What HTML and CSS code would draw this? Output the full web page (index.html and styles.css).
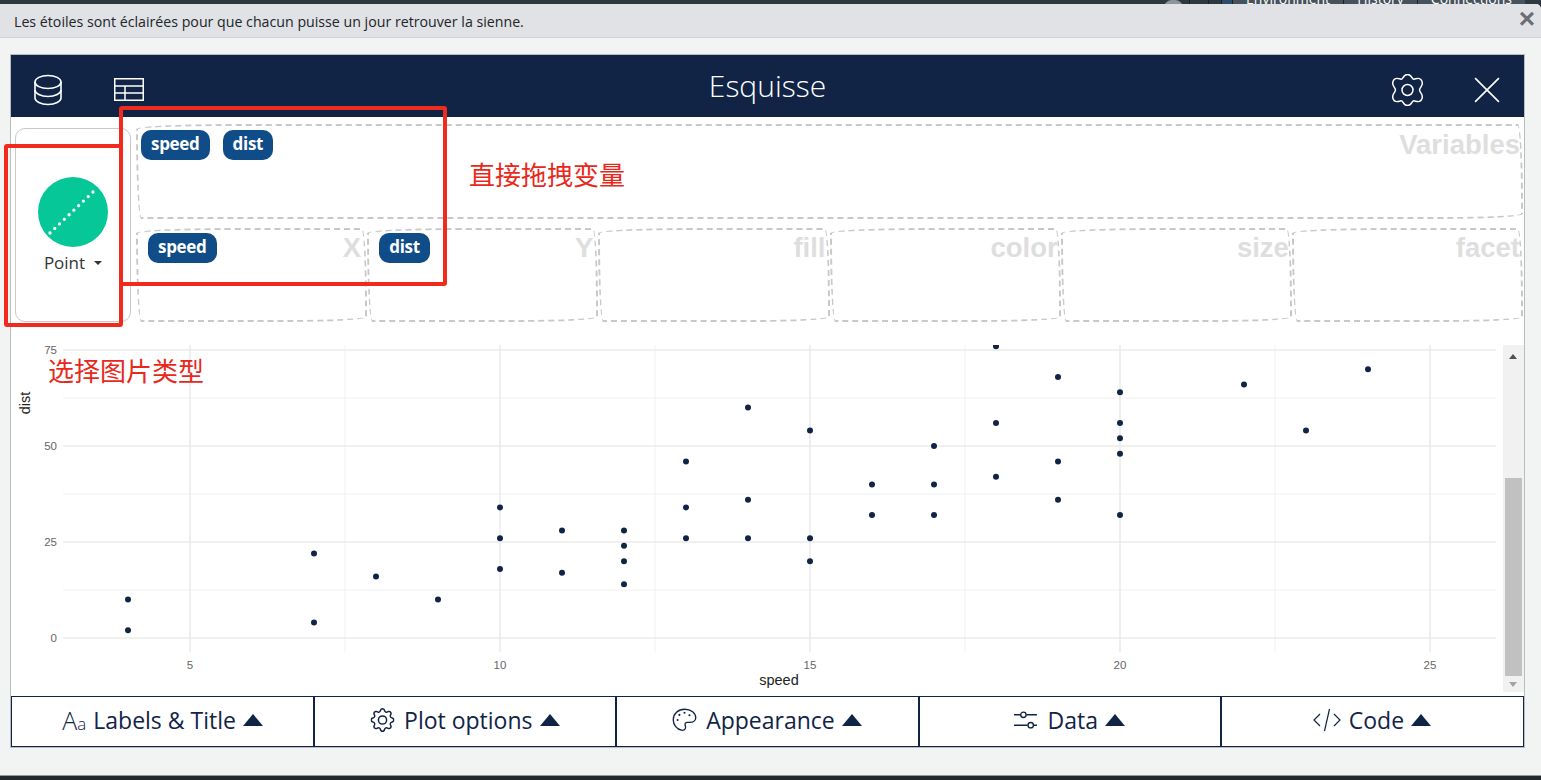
FILE: index.html
```html
<!DOCTYPE html>
<html lang="fr">
<head>
<meta charset="utf-8">
<title>Esquisse</title>
<link rel="stylesheet" href="styles.css">
</head>
<body>
<svg class="defs" width="0" height="0" aria-hidden="true">
  <symbol id="gear" viewBox="0 0 16 16">
    <path d="M8 4.754a3.246 3.246 0 1 0 0 6.492 3.246 3.246 0 0 0 0-6.492zM5.754 8a2.246 2.246 0 1 1 4.492 0 2.246 2.246 0 0 1-4.492 0z"/>
    <path d="M9.796 1.343c-.527-1.79-3.065-1.79-3.592 0l-.094.319a.873.873 0 0 1-1.255.52l-.292-.16c-1.64-.892-3.433.902-2.54 2.541l.159.292a.873.873 0 0 1-.52 1.255l-.319.094c-1.79.527-1.79 3.065 0 3.592l.319.094a.873.873 0 0 1 .52 1.255l-.16.292c-.892 1.64.901 3.434 2.541 2.54l.292-.159a.873.873 0 0 1 1.255.52l.094.319c.527 1.79 3.065 1.79 3.592 0l.094-.319a.873.873 0 0 1 1.255-.52l.292.16c1.64.893 3.434-.902 2.54-2.541l-.159-.292a.873.873 0 0 1 .52-1.255l.319-.094c1.79-.527 1.79-3.065 0-3.592l-.319-.094a.873.873 0 0 1-.52-1.255l.16-.292c.893-1.64-.902-3.433-2.541-2.54l-.292.159a.873.873 0 0 1-1.255-.52l-.094-.319zm-2.633.283c.246-.835 1.428-.835 1.674 0l.094.319a1.873 1.873 0 0 0 2.693 1.115l.291-.16c.764-.415 1.6.42 1.184 1.185l-.159.292a1.873 1.873 0 0 0 1.116 2.692l.318.094c.835.246.835 1.428 0 1.674l-.319.094a1.873 1.873 0 0 0-1.115 2.693l.16.291c.415.764-.42 1.6-1.185 1.184l-.291-.159a1.873 1.873 0 0 0-2.693 1.116l-.094.318c-.246.835-1.428.835-1.674 0l-.094-.319a1.873 1.873 0 0 0-2.692-1.115l-.292.16c-.764.415-1.6-.42-1.184-1.185l.159-.291A1.873 1.873 0 0 0 1.945 8.93l-.319-.094c-.835-.246-.835-1.428 0-1.674l.319-.094A1.873 1.873 0 0 0 3.06 4.377l-.16-.292c-.415-.764.42-1.6 1.185-1.184l.292.159a1.873 1.873 0 0 0 2.692-1.115l.094-.319z"/>
  </symbol>
</svg>

<div class="host-strip">
  <span class="host-user"></span>
  <span class="host-tab host-tab-blank"></span>
  <span class="host-tab host-tab-blank2"></span>
  <span class="host-tab host-tab-blue"></span>
  <span class="host-tab">Environment</span>
  <span class="host-tab">History</span>
  <span class="host-tab">Connections</span>
</div>

<div class="dialog">
  <div class="notice">
    <span class="notice-text">Les étoiles sont éclairées pour que chacun puisse un jour retrouver la sienne.</span>
    <span class="notice-close">×</span>
  </div>

  <div class="app">
    <header class="app-head">
      <div class="head-side">
        <svg class="head-icon head-db" viewBox="2 0 28 32" fill="none" stroke="currentColor" stroke-width="1.6">
          <ellipse cx="16" cy="8" rx="13" ry="6.500"/>
          <path d="M3 8v16c0 3.400 5.800 6.500 13 6.500s13-3.100 13-6.500V8"/>
          <path d="M3 16c0 3.400 5.800 6.500 13 6.500s13-3.100 13-6.500"/>
        </svg>
        <svg class="head-icon head-table" viewBox="0 0 30 23" fill="none" stroke="currentColor" stroke-width="1.500">
          <rect x=".75" y=".75" width="28.500" height="21.500"/>
          <path d="M1 8h28M1 15h28M11 8v14"/>
        </svg>
      </div>
      <h1 class="brand">Esquisse</h1>
      <div class="head-side head-right">
        <svg class="head-icon head-gear" viewBox="0 0 32 32" fill="none" stroke="currentColor" stroke-width="1.500">
          <path d="M9.500 5.200C12 5.500 11 .5 16 .5C21 .5 20 5.500 22.500 5.200C25 4.800 29 2.500 30.500 7.500C32 12 28.500 12.500 28 16C28.500 19.500 32 20 30.500 24.500C29 29.500 25 27.200 22.500 26.800C20 26.500 21 31.500 16 31.500C11 31.500 12 26.500 9.500 26.800C7 27.200 3 29.500 1.500 24.500C0 20 3.500 19.500 4 16C3.500 12.500 0 12 1.500 7.500C3 2.500 7 4.800 9.500 5.200Z"/>
          <circle cx="16" cy="16" r="5.500"/>
        </svg>
        <svg class="head-icon head-close" viewBox="0 0 24 24" fill="none" stroke="currentColor" stroke-width="1.500"><path d="M1 1l22 22M23 1L1 23"/></svg>
      </div>
    </header>

    <section class="builder">
      <div class="geom-box">
        <svg class="geom-disc" viewBox="0 0 70 70">
          <circle cx="35" cy="35" r="35" fill="#05c797"/>
          <path class="geom-dots" d="M12 56L56 14"/>
        </svg>
        <div class="geom-label">Point <span class="caret"></span></div>
      </div>
      <div class="zones">
        <div class="zone zone-vars">
          <span class="chip">speed</span><span class="chip">dist</span>
          <span class="zone-name">Variables</span>
        </div>
        <div class="zone-row">
          <div class="zone zone-x"><span class="chip">speed</span><span class="zone-name">X</span></div>
          <div class="zone zone-y"><span class="chip">dist</span><span class="zone-name">Y</span></div>
          <div class="zone zone-fill"><span class="zone-name">fill</span></div>
          <div class="zone"><span class="zone-name">color</span></div>
          <div class="zone"><span class="zone-name">size</span></div>
          <div class="zone"><span class="zone-name">facet</span></div>
        </div>
      </div>
    </section>

    <section class="plot-wrap">
      <svg class="plot" viewBox="11 345 1492 347" width="1492" height="347">
        <g class="grid-minor">
          <path d="M63 398H1496M63 494H1496M63 590H1496M345 345V652M655 345V652M965 345V652M1275 345V652"/>
        </g>
        <g class="grid-major">
          <path d="M63 350H1496M63 446H1496M63 542H1496M63 638H1496M190 345V652M500 345V652M810 345V652M1120 345V652M1430 345V652"/>
        </g>
        <g class="ticks">
          <text x="57" y="353.500" text-anchor="end">75</text>
          <text x="57" y="449.500" text-anchor="end">50</text>
          <text x="57" y="545.500" text-anchor="end">25</text>
          <text x="57" y="641.500" text-anchor="end">0</text>
          <text x="190" y="669" text-anchor="middle">5</text>
          <text x="500" y="669" text-anchor="middle">10</text>
          <text x="810" y="669" text-anchor="middle">15</text>
          <text x="1120" y="669" text-anchor="middle">20</text>
          <text x="1430" y="669" text-anchor="middle">25</text>
        </g>
        <text class="axis-title" x="779" y="685" text-anchor="middle">speed</text>
        <text class="axis-title" transform="translate(30 403) rotate(-90)" text-anchor="middle">dist</text>
        <g class="pts">
          <circle cx="128" cy="630.300"/><circle cx="128" cy="599.600"/>
          <circle cx="314" cy="622.600"/><circle cx="314" cy="553.500"/>
          <circle cx="376" cy="576.600"/><circle cx="438" cy="599.600"/>
          <circle cx="500" cy="568.900"/><circle cx="500" cy="538.200"/><circle cx="500" cy="507.400"/>
          <circle cx="562" cy="572.700"/><circle cx="562" cy="530.500"/>
          <circle cx="624" cy="584.200"/><circle cx="624" cy="561.200"/><circle cx="624" cy="545.800"/><circle cx="624" cy="530.500"/>
          <circle cx="686" cy="538.200"/><circle cx="686" cy="507.400"/><circle cx="686" cy="461.400"/>
          <circle cx="748" cy="538.200"/><circle cx="748" cy="499.800"/><circle cx="748" cy="407.600"/>
          <circle cx="810" cy="561.200"/><circle cx="810" cy="538.200"/><circle cx="810" cy="430.600"/>
          <circle cx="872" cy="515.100"/><circle cx="872" cy="484.400"/>
          <circle cx="934" cy="515.100"/><circle cx="934" cy="484.400"/><circle cx="934" cy="446"/>
          <circle cx="996" cy="476.700"/><circle cx="996" cy="422.900"/><circle cx="996" cy="346.200"/>
          <circle cx="1058" cy="499.800"/><circle cx="1058" cy="461.400"/><circle cx="1058" cy="376.900"/>
          <circle cx="1120" cy="515.100"/><circle cx="1120" cy="453.700"/><circle cx="1120" cy="438.300"/><circle cx="1120" cy="422.900"/><circle cx="1120" cy="392.200"/>
          <circle cx="1244" cy="384.600"/><circle cx="1306" cy="430.600"/><circle cx="1368" cy="369.200"/>
        </g>
      </svg>
      <div class="scroll">
        <span class="scroll-arrow scroll-up"></span>
        <span class="scroll-thumb"></span>
        <span class="scroll-arrow scroll-down"></span>
      </div>
    </section>

    <nav class="controls">
      <div class="ctrl"><span class="ctrl-aa">A<small>a</small></span>Labels &amp; Title<span class="tri"></span></div>
      <div class="ctrl">
        <svg class="ctrl-icon" viewBox="0 0 16 16" fill="currentColor"><use href="#gear"/></svg>Plot options<span class="tri"></span>
      </div>
      <div class="ctrl">
        <svg class="ctrl-icon" viewBox="0 0 16 16" fill="none" stroke="currentColor" stroke-width=".9"><path d="M8 .8C12.500 .8 15.500 3.500 15.500 6.500C15.500 8.500 13.500 9.600 11.500 9.600L9.800 9.600C8.800 9.600 8.200 10.300 8.400 11.300C8.600 12.300 9 12.600 8.600 13.600C8.200 14.800 7 15 6 14.800C3 14.200 .5 11.300 .5 7.800C.5 3.800 3.800 .8 8 .8Z"/><circle cx="3.400" cy="8" r=".7" fill="currentColor" stroke="none"/><circle cx="4.600" cy="4.600" r=".7" fill="currentColor" stroke="none"/><circle cx="8" cy="3.200" r=".7" fill="currentColor" stroke="none"/><circle cx="11.300" cy="4.800" r=".7" fill="currentColor" stroke="none"/></svg>Appearance<span class="tri"></span>
      </div>
      <div class="ctrl">
        <svg class="ctrl-icon" viewBox="0 0 24 20" fill="none" stroke="currentColor" stroke-width="1.300"><path d="M1 5h6M13 5h10M1 15h13M20 15h3"/><circle cx="10" cy="5" r="2.600"/><circle cx="17" cy="15" r="2.600"/></svg>Data<span class="tri"></span>
      </div>
      <div class="ctrl">
        <svg class="ctrl-icon ctrl-code" viewBox="0 0 28 24" fill="none" stroke="currentColor" stroke-width="1.200"><path d="M7 6l-6 6 6 6M21 6l6 6-6 6M16.500 1l-5 22"/></svg>Code<span class="tri"></span>
      </div>
    </nav>
  </div>
</div>

<div class="mark mark-geom"></div>
<div class="mark mark-vars"></div>
<p class="note note-drag">直接拖拽变量</p>
<p class="note note-type">选择图片类型</p>
</body>
</html>
```
FILE: styles.css
```css
* { box-sizing: border-box; }
html, body { margin: 0; height: 100%; }
body {
  width: 1541px;
  height: 780px;
  overflow: hidden;
  background: #222a30;
  display: flex;
  flex-direction: column;
  font-family: "Open Sans", "Noto Sans", sans-serif;
  color: #112446;
  position: relative;
}
.defs { position: absolute; }

.host-strip {
  height: 4px;
  overflow: hidden;
  flex: none;
  display: flex;
  justify-content: flex-end;
  background: #2e3840;
  padding-right: 16px;
}
.host-user { width: 19px; height: 8px; margin-right: 6px; border-radius: 10px 10px 0 0; background: #8d959c; }
.host-tab {
  padding: 0 13px;
  border-left: 1px solid #1b2127;
  color: #fff;
  font-size: 14px;
  margin-top: -6px;
  height: 10px;
  line-height: 10px;
  white-space: nowrap;
  background: #46525c;
}
.host-tab-blank { width: 19px; padding: 0; background: #2e3840; }
.host-tab-blank2 { width: 13px; padding: 0; background: #2e3840; }
.host-tab-blue { width: 11px; padding: 0; background: #2d4c6c; }

.dialog {
  flex: none;
  height: 772px;
  background: #f2f4f4;
  border-bottom: 1px solid #999;
  border-radius: 0 5px 0 0;
  display: flex;
  flex-direction: column;
}
.notice {
  height: 34px;
  flex: none;
  background: #e0e2e5;
  border-bottom: 1px solid #cfd2d4;
  border-radius: 0 5px 0 0;
  display: flex;
  align-items: center;
  justify-content: space-between;
  padding: 0 6px 0 14px;
  font-size: 14.200px;
  color: #212529;
}
.notice-text { margin-top: 1px; }
.notice-close {
  font-family: "Liberation Sans", Arial, sans-serif;
  font-size: 28px;
  font-weight: 700;
  color: #6b6e72;
  line-height: 1;
  margin-top: -3px;
}

.app {
  margin: 16px 16px 0 10px;
  width: 1515px;
  height: 694px;
  border: 1px solid #b9bdbf;
  background: #fff;
  display: flex;
  flex-direction: column;
}
.app-head {
  height: 62px;
  flex: none;
  background: #112446;
  color: #fff;
  display: grid;
  grid-template-columns: 1fr auto 1fr;
  align-items: center;
}
.head-side { display: flex; align-items: center; padding: 7px 0 0 23px; gap: 52px; }
.head-right { justify-content: flex-end; padding: 7px 24px 0 0; gap: 50px; }
.head-icon { display: block; }
.head-db { width: 28px; height: 32px; }
.head-table { width: 30px; height: 23px; }
.head-gear { width: 33px; height: 32px; }
.head-close { width: 26px; height: 26px; }
.brand {
  margin: -1px 0 0;
  font-family: "Open Sans", sans-serif;
  font-size: 30px;
  font-weight: 300;
  color: #fff;
  line-height: 1;
}

.builder {
  height: 228px;
  flex: none;
  display: flex;
  padding: 7px 0 0 4px;
  gap: 5px;
}
.geom-box {
  width: 116px;
  height: 194px;
  margin-top: 4px;
  flex: none;
  border: 1px solid #c9c9c9;
  border-radius: 10px;
  display: flex;
  flex-direction: column;
  align-items: center;
  padding-top: 48px;
}
.geom-disc { width: 70px; height: 70px; display: block; }
.geom-dots {
  fill: none;
  stroke: #fff;
  stroke-width: 3.300;
  stroke-linecap: round;
  stroke-dasharray: 0 6.600;
}
.geom-label {
  font-size: 17px;
  line-height: 22px;
  margin-top: 5px;
  color: #333;
  display: flex;
  align-items: center;
  gap: 9px;
}
.caret {
  border-left: 4px solid transparent;
  border-right: 4px solid transparent;
  border-top: 4px solid #333;
}
.zones { flex: 1; min-width: 0; display: flex; flex-direction: column; gap: 9px; padding-right: 1px; }
.zone {
  position: relative;
  flex: 1;
  min-width: 0;
  height: 94px;
  border: 2px dashed #c8c8c8;
  border-radius: 255px 15px 225px 15px / 15px 225px 15px 255px;
  padding: 3px 0 0 10px;
}
.zone-vars { flex: none; height: 95px; padding: 4px 0 0 3px; }
.zone-row { display: flex; }
.zone-name {
  position: absolute;
  top: 3px;
  right: 1px;
  font-family: "Liberation Sans", Arial, sans-serif;
  font-weight: 700;
  font-size: 27.500px;
  line-height: 30px;
  color: #dedede;
}
.zone-vars .zone-name { top: 4px; }
.zone-x .zone-name { right: 4px; }
.zone-y .zone-name { right: 3px; }
.zone-fill .zone-name { right: 2px; }
.chip {
  display: inline-block;
  height: 30px;
  line-height: 28px;
  padding: 0 10px;
  border-radius: 10px;
  background: #0f4c88;
  color: #fff;
  font-weight: 700;
  font-size: 17px;
  letter-spacing: -.3px;
  margin-right: 13px;
}

.plot-wrap {
  height: 347px;
  flex: none;
  display: flex;
}
.plot { display: block; flex: none; }
.grid-minor path { fill: none; stroke: #f1f1f1; stroke-width: 1; }
.grid-major path { fill: none; stroke: #ebebeb; stroke-width: 1.600; }
.ticks text { font-family: "Liberation Sans", Arial, sans-serif; font-size: 11.500px; fill: #666; }
.axis-title { font-family: "Liberation Sans", Arial, sans-serif; font-size: 14.500px; fill: #222; }
.pts circle { r: 3px; fill: #112446; }
.scroll {
  width: 21px;
  flex: none;
  background: #f1f1f1;
  display: flex;
  flex-direction: column;
  align-items: center;
  position: relative;
}
.scroll-arrow { position: absolute; left: 6px; border-left: 4.500px solid transparent; border-right: 4.500px solid transparent; }
.scroll-up { top: 9px; border-bottom: 5px solid #505050; }
.scroll-down { bottom: 5px; border-top: 5px solid #a3a3a3; }
.scroll-thumb { width: 17px; height: 198px; margin-top: 133px; background: #c1c1c1; }

.controls {
  height: 51px;
  flex: none;
  margin-top: 4px;
  display: grid;
  grid-template-columns: repeat(5, 1fr);
  border: 1px solid #112446;
}
.ctrl {
  display: flex;
  align-items: center;
  justify-content: center;
  font-size: 23px;
  color: #112446;
  border-right: 2px solid #112446;
  margin-right: -1px;
  padding-bottom: 3px;
  white-space: nowrap;
}
.ctrl:last-child { border-right: 0; margin-right: 0; }
.ctrl-aa { font-size: 25px; font-weight: 300; margin-right: 7px; }
.ctrl-aa small { font-size: 17px; }
.ctrl-icon { width: 25px; height: 24px; margin-right: 9px; flex: none; }
.ctrl-code { width: 28px; margin-right: 8px; }
.tri {
  margin: 0 0 0 7px;
  border-left: 10.500px solid transparent;
  border-right: 10.500px solid transparent;
  border-bottom: 12px solid #112446;
}

.mark {
  position: absolute;
  border: 4px solid #f02a1d;
  border-radius: 3px;
  pointer-events: none;
}
.mark-geom { left: 4px; top: 144px; width: 119px; height: 183px; }
.mark-vars { left: 119px; top: 106px; width: 328px; height: 180px; }
.note {
  position: absolute;
  margin: 0;
  font-family: "Noto Sans CJK SC", sans-serif;
  font-size: 26px;
  line-height: 30px;
  color: #e9281c;
}
.note-drag { left: 469px; top: 159px; }
.note-type { left: 48px; top: 355px; }
```
